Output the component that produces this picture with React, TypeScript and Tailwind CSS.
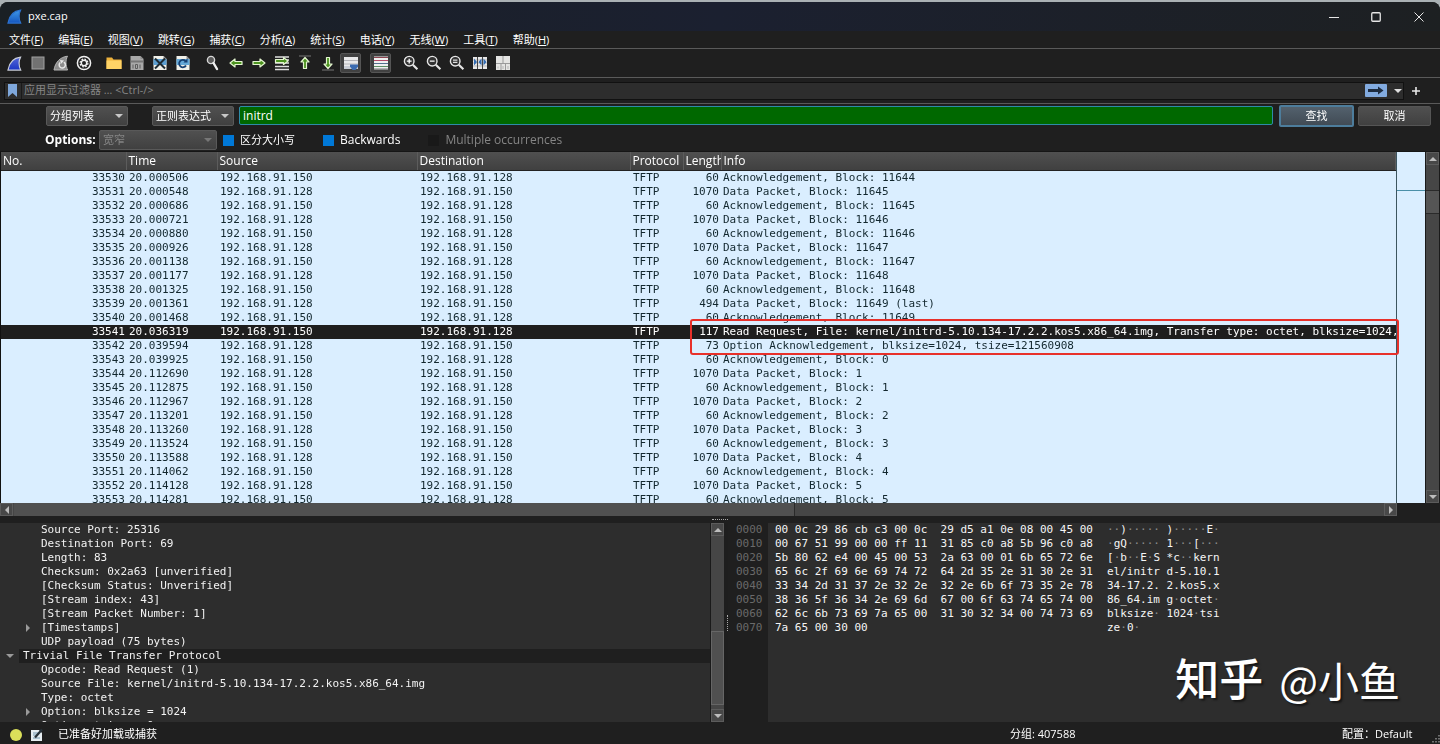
import * as React from "react";
import clsx from "clsx";

const menus = [
  ["文件", "F"],
  ["编辑", "E"],
  ["视图", "V"],
  ["跳转", "G"],
  ["捕获", "C"],
  ["分析", "A"],
  ["统计", "S"],
  ["电话", "Y"],
  ["无线", "W"],
  ["工具", "T"],
  ["帮助", "H"],
];

const A = "192.168.91.150";
const B = "192.168.91.128";

// no, time, source, destination, length, info
const packets: [number, string, string, string, number, string][] = [
  [33530, "20.000506", A, B, 60, "Acknowledgement, Block: 11644"],
  [33531, "20.000548", B, A, 1070, "Data Packet, Block: 11645"],
  [33532, "20.000686", A, B, 60, "Acknowledgement, Block: 11645"],
  [33533, "20.000721", B, A, 1070, "Data Packet, Block: 11646"],
  [33534, "20.000880", A, B, 60, "Acknowledgement, Block: 11646"],
  [33535, "20.000926", B, A, 1070, "Data Packet, Block: 11647"],
  [33536, "20.001138", A, B, 60, "Acknowledgement, Block: 11647"],
  [33537, "20.001177", B, A, 1070, "Data Packet, Block: 11648"],
  [33538, "20.001325", A, B, 60, "Acknowledgement, Block: 11648"],
  [33539, "20.001361", B, A, 494, "Data Packet, Block: 11649 (last)"],
  [33540, "20.001468", A, B, 60, "Acknowledgement, Block: 11649"],
  [33541, "20.036319", A, B, 117, "Read Request, File: kernel/initrd-5.10.134-17.2.2.kos5.x86_64.img, Transfer type: octet, blksize=1024,"],
  [33542, "20.039594", B, A, 73, "Option Acknowledgement, blksize=1024, tsize=121560908"],
  [33543, "20.039925", A, B, 60, "Acknowledgement, Block: 0"],
  [33544, "20.112690", B, A, 1070, "Data Packet, Block: 1"],
  [33545, "20.112875", A, B, 60, "Acknowledgement, Block: 1"],
  [33546, "20.112967", B, A, 1070, "Data Packet, Block: 2"],
  [33547, "20.113201", A, B, 60, "Acknowledgement, Block: 2"],
  [33548, "20.113260", B, A, 1070, "Data Packet, Block: 3"],
  [33549, "20.113524", A, B, 60, "Acknowledgement, Block: 3"],
  [33550, "20.113588", B, A, 1070, "Data Packet, Block: 4"],
  [33551, "20.114062", A, B, 60, "Acknowledgement, Block: 4"],
  [33552, "20.114128", B, A, 1070, "Data Packet, Block: 5"],
  [33553, "20.114281", A, B, 60, "Acknowledgement, Block: 5"],
];

const columns = ["No.", "Time", "Source", "Destination", "Protocol", "Length", "Info"];

const details: { text: string; arrow?: "open" | "closed"; top?: boolean }[] = [
  { text: "Source Port: 25316" },
  { text: "Destination Port: 69" },
  { text: "Length: 83" },
  { text: "Checksum: 0x2a63 [unverified]" },
  { text: "[Checksum Status: Unverified]" },
  { text: "[Stream index: 43]" },
  { text: "[Stream Packet Number: 1]" },
  { text: "[Timestamps]", arrow: "closed" },
  { text: "UDP payload (75 bytes)" },
  { text: "Trivial File Transfer Protocol", arrow: "open", top: true },
  { text: "Opcode: Read Request (1)" },
  { text: "Source File: kernel/initrd-5.10.134-17.2.2.kos5.x86_64.img" },
  { text: "Type: octet" },
  { text: "Option: blksize = 1024", arrow: "closed" },
  { text: "Option: tsize = 0", arrow: "closed" },
];

const bytes = [
  ["0000", "00 0c 29 86 cb c3 00 0c  29 d5 a1 0e 08 00 45 00", "··)····· )·····E·"],
  ["0010", "00 67 51 99 00 00 ff 11  31 85 c0 a8 5b 96 c0 a8", "·gQ····· 1···[···"],
  ["0020", "5b 80 62 e4 00 45 00 53  2a 63 00 01 6b 65 72 6e", "[·b··E·S *c··kern"],
  ["0030", "65 6c 2f 69 6e 69 74 72  64 2d 35 2e 31 30 2e 31", "el/initr d-5.10.1"],
  ["0040", "33 34 2d 31 37 2e 32 2e  32 2e 6b 6f 73 35 2e 78", "34-17.2. 2.kos5.x"],
  ["0050", "38 36 5f 36 34 2e 69 6d  67 00 6f 63 74 65 74 00", "86_64.im g·octet·"],
  ["0060", "62 6c 6b 73 69 7a 65 00  31 30 32 34 00 74 73 69", "blksize· 1024·tsi"],
  ["0070", "7a 65 00 30 00", "ze·0·"],
];

const mono = "font-['DejaVu_Sans_Mono','Noto_Sans_CJK_SC',monospace] text-[11px] leading-[14px]";

function Fin({ top, bottom, edge, size }: { top: string; bottom: string; edge: string; size: number }) {
  const id = React.useId();
  return (
    <svg width={size} height={size} viewBox="0 0 16 16">
      <defs>
        <linearGradient id={id} x1="0" y1="0" x2="0" y2="1">
          <stop offset="0" stopColor={top} />
          <stop offset="1" stopColor={bottom} />
        </linearGradient>
      </defs>
      <path d="M1 15C2.2 7.5 7 2 14.5 1.2C12.4 5 12.6 10.5 14.6 15Z" fill={`url(#${id})`} stroke={edge} strokeWidth="1.2" />
    </svg>
  );
}

function Icon({ children }: { children: React.ReactNode }) {
  return (
    <svg width="16" height="16" viewBox="0 0 16 16" fill="none">
      {children}
    </svg>
  );
}

function Page({ fill, children }: { fill: string; children: React.ReactNode }) {
  return (
    <Icon>
      <path d="M1.500 1h10l3 3v11h-13z" fill={fill} />
      <path d="M11.500 1v3h3z" fill="#8b8b8b" />
      {children}
    </Icon>
  );
}

function Lens({ children }: { children?: React.ReactNode }) {
  return (
    <Icon>
      <circle cx="6.2" cy="6.2" r="4.8" fill="#333" stroke="#e6e6e6" strokeWidth="1.4" />
      <path d="M9.8 9.8l4.6 4.4" stroke="#e6e6e6" strokeWidth="2.2" />
      {children}
    </Icon>
  );
}

const arrowStyle = { fill: "#4d9420", stroke: "#e3f5cf", strokeWidth: 1.2, strokeLinejoin: "round" as const };

const tools: { label: string; icon: React.ReactNode; gap?: boolean; on?: boolean }[] = [
  { label: "开始捕获", icon: <Fin size={15} top="#5568d8" bottom="#1c36c4" edge="#c9cdd8" /> },
  { label: "停止捕获", icon: <Icon><rect x="2" y="2" width="12" height="12" fill="#727272" stroke="#a2a2a2" /></Icon> },
  {
    label: "重新开始",
    icon: (
      <Icon>
        <path d="M1 15C2.2 7.5 7 2 14.5 1.2C12.4 5 12.6 10.5 14.6 15Z" fill="#8d8d8d" stroke="#b5b5b5" />
        <path d="M10.8 7.2a3.1 3.1 0 1 1-3.6 .4" stroke="#e8e8e8" strokeWidth="1.5" />
        <path d="M7 5l1.2 3.8L11 5.6z" fill="#e8e8e8" />
      </Icon>
    ),
  },
  {
    label: "捕获选项",
    icon: (
      <Icon>
        <circle cx="8" cy="8" r="6.6" stroke="#f0f0f0" strokeWidth="1.5" />
        <circle cx="8" cy="8" r="3.9" stroke="#f0f0f0" strokeWidth="1.2" strokeDasharray="1.7 1.36" />
        <circle cx="8" cy="8" r="2.7" stroke="#f0f0f0" strokeWidth="1.4" />
      </Icon>
    ),
  },
  {
    label: "打开",
    gap: true,
    icon: (
      <Icon>
        <path d="M0.5 2.5h5.5l1.5 2h8v9.5h-15z" fill="#eeb23c" />
        <path d="M0.5 5.5h15v8.5h-15z" fill="#ffd366" />
      </Icon>
    ),
  },
  {
    label: "保存",
    icon: (
      <Page fill="#a9a9a9">
        <path d="M1.5 5.5h13v2h-13z" fill="#777" />
        <path d="M4 9.5v4M6.5 9.5h2v4h-2zM11 9.5v4" stroke="#5d5d5d" />
      </Page>
    ),
  },
  {
    label: "关闭",
    icon: (
      <Page fill="#f1f1ea">
        <path d="M1.5 4h13v6h-13z" fill="#5b9fd2" />
        <path d="M3 3.5l10 10M13 3.5l-10 10" stroke="#1d2b33" strokeWidth="2" />
      </Page>
    ),
  },
  {
    label: "重新加载",
    icon: (
      <Page fill="#f1f1ea">
        <path d="M1.5 4h13v6h-13z" fill="#65a9d8" />
        <path d="M11 10.5a3.7 3.7 0 1 1-.5-4.5" stroke="#163f70" strokeWidth="1.8" />
        <path d="M8.5 7.5h4V3.5z" fill="#163f70" />
      </Page>
    ),
  },
  {
    label: "查找",
    gap: true,
    icon: (
      <Icon>
        <circle cx="6" cy="5" r="3.6" fill="#5a5a5a" stroke="#d7d7d7" strokeWidth="1.4" />
        <path d="M8.5 8l3.5 6" stroke="#f0f0f0" strokeWidth="2.4" strokeLinecap="round" />
      </Icon>
    ),
  },
  { label: "后退", icon: <Icon><path d="M2 8l5-4v2.5h7v3H7V12z" {...arrowStyle} /></Icon> },
  { label: "前进", icon: <Icon><path d="M14 8l-5-4v2.5H2v3h7V12z" {...arrowStyle} /></Icon> },
  {
    label: "转到分组",
    icon: (
      <Icon>
        <path d="M1 2h14M1 5h14M1 8h14M1 11.5h14M1 14.5h14" stroke="#dedede" strokeWidth="1.5" />
        <path d="M14 6L9.5 2.5v2H1.5v3h8v2z" {...arrowStyle} />
      </Icon>
    ),
  },
  {
    label: "首个分组",
    icon: (
      <Icon>
        <path d="M2 1h12" stroke="#777" />
        <path d="M8 2.5l4 4.5H9.5v6.5h-3V7H4z" {...arrowStyle} />
      </Icon>
    ),
  },
  {
    label: "最后分组",
    icon: (
      <Icon>
        <path d="M2 15h12" stroke="#777" />
        <path d="M8 13.5l4-4.5H9.5V2.5h-3V9H4z" {...arrowStyle} />
      </Icon>
    ),
  },
  {
    label: "自动滚动",
    on: true,
    icon: (
      <Icon>
        <path d="M1 2h14v12H1z" fill="#e9e9ea" />
        <path d="M1 5.5h14M1 9h14" stroke="#b4b4b8" />
        <path d="M1 11h14v3H1z" fill="#c8ccd4" />
        <path d="M7 9.5h8v2l-2.5 3.5h-3L7 11.5z" fill="#3b6bb0" />
      </Icon>
    ),
  },
  {
    label: "着色",
    on: true,
    gap: true,
    icon: (
      <Icon>
        <path d="M1 1.5h14v13H1z" fill="#f0f0f0" />
        <path d="M1 2.5h14" stroke="#8f4552" />
        <path d="M1 5.5h14" stroke="#b44b68" />
        <path d="M1 8.5h14" stroke="#54718f" />
        <path d="M1 11.5h14" stroke="#5c8e63" />
        <path d="M1 14h14" stroke="#777" />
      </Icon>
    ),
  },
  { label: "放大", gap: true, icon: <Lens><path d="M3.8 6.2h4.8M6.2 3.8v4.8" stroke="#fff" strokeWidth="1.3" /></Lens> },
  { label: "缩小", icon: <Lens><path d="M3.8 6.2h4.8" stroke="#fff" strokeWidth="1.3" /></Lens> },
  { label: "原始大小", icon: <Lens><path d="M4 5.2h4.4M4 7.4h4.4" stroke="#ddd" strokeWidth="1.2" /></Lens> },
  {
    label: "调整列宽",
    icon: (
      <Icon>
        <path d="M1 2h14v12H1z" fill="#e8e8e8" />
        <path d="M1 5h14M1 8h14M1 11h14" stroke="#b9b9b9" />
        <path d="M5.5 2v12M10.5 2v12" stroke="#444" />
        <path d="M2 3.5v7l3-3.5zM9.5 3.5v7L6.5 7zM11.5 3.5v7l3-3.5z" fill="#326bb2" />
      </Icon>
    ),
  },
  {
    label: "重置布局",
    icon: (
      <Icon>
        <path d="M1 1h14v14H1z" fill="#e4e4e2" />
        <path d="M8 1v7M1 8.5h14M6 8.5V15M10.5 8.5V15" stroke="#9a9a9a" />
        <path d="M3 11.5v2M8 11v3M13 11v3" stroke="#b5b5b5" />
      </Icon>
    ),
  },
];

function Triangle({ dir, color = "#bdbdbd" }: { dir: "up" | "down" | "left" | "right"; color?: string }) {
  const d = {
    up: "M0 6l4-4 4 4z",
    down: "M0 2l4 4 4-4z",
    left: "M6 0L2 4l4 4z",
    right: "M2 0l4 4-4 4z",
  }[dir];
  return (
    <svg width="8" height="8" viewBox="0 0 8 8" className="shrink-0">
      <path d={d} fill={color} />
    </svg>
  );
}

function Select({ value, label, className, disabled }: { value: string; label: string; className: string; disabled?: boolean }) {
  return (
    <div className={clsx("relative", className)}>
      <select
        aria-label={label}
        disabled={disabled}
        className={clsx(
          "h-5 w-full appearance-none rounded-xs border border-[#595959] bg-linear-to-b from-[#505050] to-[#404040] px-[3px] leading-[18px] outline-none",
          disabled ? "text-[#858585]" : "text-white"
        )}
      >
        <option>{value}</option>
      </select>
      <span className="pointer-events-none absolute inset-y-0 right-[5px] flex items-center">
        <Triangle dir="down" color={disabled ? "#777" : "#c8c8c8"} />
      </span>
    </div>
  );
}

function Check({ label, checked, disabled }: { label: React.ReactNode; checked?: boolean; disabled?: boolean }) {
  return (
    <label className={clsx("flex items-center gap-[6px]", disabled && "text-[#858585]")}>
      <input
        type="checkbox"
        defaultChecked={checked}
        disabled={disabled}
        className="size-[11px] appearance-none bg-[#191919] checked:bg-[#0078d7]"
      />
      {label}
    </label>
  );
}

function ArrowButton({ dir }: { dir: "up" | "down" | "left" | "right" }) {
  return (
    <button type="button" aria-label={dir} className="flex size-[13px] shrink-0 items-center justify-center border border-[#5c5c5c] bg-[#484848]">
      <Triangle dir={dir} />
    </button>
  );
}

function TitleBar() {
  return (
    <header className="flex h-[29px] shrink-0 items-center bg-linear-to-r from-[#1a2024] via-[#1b2030] to-[#1d2022] pl-[7px]">
      <Fin size={15} top="#3f9ae8" bottom="#1455c0" edge="#2c72cf" />
      <h1 className="ml-[6px] flex-1">pxe.cap</h1>
      <div className="flex text-[#e6e6e6]">
        <button type="button" aria-label="最小化" className="flex w-[43px] justify-center">
          <svg width="10" height="10" viewBox="0 0 10 10"><path d="M0 5.5h10" stroke="currentColor" /></svg>
        </button>
        <button type="button" aria-label="最大化" className="flex w-[42px] justify-center">
          <svg width="10" height="10" viewBox="0 0 10 10" fill="none"><rect x=".75" y=".75" width="8.5" height="8.5" rx="1" stroke="currentColor" strokeWidth="1.3" /></svg>
        </button>
        <button type="button" aria-label="关闭窗口" className="flex w-[43px] justify-center">
          <svg width="10" height="10" viewBox="0 0 10 10"><path d="M.5 .5l9 9M9.5 .5l-9 9" stroke="currentColor" /></svg>
        </button>
      </div>
    </header>
  );
}

function PacketList() {
  return (
    <section className="relative flex h-[351px] shrink-0 border-l border-[#111]">
      <div className="min-w-0 flex-1 overflow-hidden bg-[#daeeff]">
        <table className="w-full table-fixed border-collapse">
          <colgroup>
            <col className="w-[125px]" />
            <col className="w-[91px]" />
            <col className="w-[200px]" />
            <col className="w-[213px]" />
            <col className="w-[53px]" />
            <col className="w-[38px]" />
            <col />
          </colgroup>
          <thead>
            <tr className="h-[18px] bg-linear-to-b from-[#505050] to-[#404040] text-left text-[12px] leading-[17px] text-white">
              {columns.map((c) => (
                <th key={c} className="overflow-hidden border-r border-b border-r-[#5c5c5c] border-b-[#222] p-0 pl-[2px] font-normal whitespace-nowrap">
                  {c}
                </th>
              ))}
            </tr>
          </thead>
          <tbody className={mono}>
            {packets.map(([no, time, src, dst, len, info]) => (
              <tr key={no} className={clsx("whitespace-pre", no === 33541 ? "bg-[#1e1e1e] text-white" : "text-[#12272e]")}>
                <td className="p-0 pr-[1px] text-right">{no}</td>
                <td className="p-0 pl-[3px]">{time}</td>
                <td className="p-0 pl-[3px]">{src}</td>
                <td className="p-0 pl-[3px]">{dst}</td>
                <td className="p-0 pl-[3px]">TFTP</td>
                <td className="p-0 pr-[2px] text-right">{len}</td>
                <td className="overflow-hidden p-0 pl-[2px]">{info}</td>
              </tr>
            ))}
          </tbody>
        </table>
      </div>
      <div className="w-[29px] border-l border-[#3c5560] bg-[#daeeff]">
        <div className="h-[39px] border-b border-[#4a8fa8]" />
      </div>
      <div className="flex w-[15px] flex-col border-x border-[#1a1a1a] bg-[#464646]">
        <ArrowButton dir="up" />
        <div className="mt-[25px] h-6 border-y border-[#2a2a2a] bg-[#555]" />
        <div className="flex-1" />
        <ArrowButton dir="down" />
      </div>
      {/* highlighted request / option ack */}
      <div className="pointer-events-none absolute top-[167px] right-[41px] left-[689px] h-9 rounded-[3px] border-2 border-[#e8302a]" />
    </section>
  );
}

function Details() {
  return (
    <section className="flex w-[724px] shrink-0 bg-[#2d2d2d]">
      <ul className={clsx("min-w-0 flex-1 overflow-hidden text-[#f2f2f2]", mono)}>
        {details.map((d) => (
          <li key={d.text} className={clsx("flex items-center whitespace-pre", d.top ? "pl-[6px]" : "pl-6")}>
            <span className="flex w-[13px] shrink-0 items-center">
              {d.arrow && <Triangle dir={d.arrow === "open" ? "down" : "right"} color="#9a9a9a" />}
            </span>
            <span className={clsx("flex-1 pl-[4px]", d.top && "bg-[#1f1f1f]")}>{d.text}</span>
          </li>
        ))}
      </ul>
      <div className="flex w-[14px] flex-col border-l border-[#1a1a1a] bg-[#464646]">
        <ArrowButton dir="up" />
        <div className="h-[95px]" />
        <div className="h-[74px] border border-[#666] bg-[#505050]" />
        <div className="flex-1" />
        <ArrowButton dir="down" />
      </div>
    </section>
  );
}

function Bytes() {
  return (
    <section className="relative min-w-0 flex-1 bg-[linear-gradient(to_right,#1f1f1f_40px,#2d2d2d_40px)]">
      <table className={clsx("border-collapse whitespace-pre text-[#f5f5f5]", mono)}>
        <tbody>
          {bytes.map(([offset, hex, ascii]) => (
            <tr key={offset}>
              <td className="w-10 p-0 pl-[8px] text-[#6a6a6a]">{offset}</td>
              <td className="w-[339px] p-0 pl-[7px]">{hex}</td>
              <td className="p-0">
                {ascii.split(/(·+)/).map((part, i) =>
                  part.startsWith("·") ? (
                    <span key={i} className="text-[#8a8a8a]">{part}</span>
                  ) : (
                    part
                  )
                )}
              </td>
            </tr>
          ))}
        </tbody>
      </table>
      <p className="absolute right-10 bottom-[15px] flex items-center gap-4 leading-[56px] text-white [text-shadow:2px_2px_2px_#0008]">
        <span className="text-[44px] font-medium">知乎</span>
        <span className="font-['Noto_Sans_CJK_SC',sans-serif] text-[41px]">@小鱼</span>
      </p>
    </section>
  );
}

export default function App() {
  const [query, setQuery] = React.useState("initrd");

  return (
    <div className="h-screen bg-[#aab1b4] pt-[2px]">
      <div className="flex h-full flex-col overflow-hidden rounded-t-lg bg-[#1f1f1f] font-['Open_Sans','Noto_Sans_CJK_SC',sans-serif] text-[11px] text-white">
        <TitleBar />
        <nav className="flex h-[18px] shrink-0 items-center gap-px border-b border-[#5a5a5a] pl-[2px] leading-4">
          {menus.map(([name, key]) => (
            <button key={key} type="button" className="px-[7px] whitespace-nowrap">
              {name}(<u>{key}</u>)
            </button>
          ))}
        </nav>
        <div className="flex h-[29px] shrink-0 items-center border-b border-[#5a5a5a] pl-[3px]">
          {tools.map((t) => (
            <button
              key={t.label}
              type="button"
              aria-label={t.label}
              className={clsx(
                "flex h-5 w-[23px] items-center justify-center",
                t.gap && "ml-[7px]"
              )}
            >
              <span className={clsx("flex h-5 w-[21px] items-center justify-center rounded-xs", t.on && "border border-[#555] bg-[#414141]")}>
                {t.icon}
              </span>
            </button>
          ))}
        </div>

        <div className="flex h-[26px] shrink-0 items-center border-b border-[#5a5a5a] pl-1">
          <div className="flex h-[18px] flex-1 items-center border border-[#111] bg-[#2d2d2d] pl-[3px]">
            <svg width="9" height="13" viewBox="0 0 9 13" className="mr-[4px]">
              <path d="M0 0h9v13L4.5 9 0 13z" fill="#7fa8dc" />
            </svg>
            <input
              aria-label="显示过滤器"
              placeholder="应用显示过滤器 … <Ctrl-/>"
              className="h-4 min-w-0 flex-1 border-l border-[#1a1a1a] bg-transparent pl-[2px] outline-none placeholder:text-[#858585]"
            />
            <button type="button" aria-label="应用" className="flex h-[13px] w-[22px] items-center justify-center rounded-[1px] bg-[#82abe0]">
              <svg width="16" height="9" viewBox="0 0 16 9">
                <path d="M0 3h10V.5l5.5 4L10 8.5V6H0z" fill="#1d2c40" />
              </svg>
            </button>
            <button type="button" aria-label="最近的过滤器" className="flex w-4 justify-end pr-px">
              <Triangle dir="down" color="#e0e0e0" />
            </button>
          </div>
          <button type="button" aria-label="添加" className="flex w-9 pl-2">
            <svg width="8" height="8" viewBox="0 0 8 8">
              <path d="M4 0v8M0 4h8" stroke="#e8e8e8" strokeWidth="1.6" />
            </svg>
          </button>
        </div>

        <div className="flex h-[23px] shrink-0 items-center pr-[9px] pl-[46px]">
          <Select label="搜索范围" value="分组列表" className="w-[82px]" />
          <Select label="搜索类型" value="正则表达式" className="ml-6 w-[82px]" />
          <input
            aria-label="搜索"
            autoFocus
            value={query}
            onChange={(e) => setQuery(e.target.value)}
            className="ml-[5px] h-[19px] min-w-0 flex-1 rounded-xs border border-[#2e8ba8] bg-[#006800] px-[3px] text-[12px] outline-none"
          />
          <button type="button" className="ml-[6px] h-[22px] w-[75px] rounded-xs border-2 border-[#4d7d9c] bg-linear-to-b from-[#53616d] to-[#414b55] leading-4">
            查找
          </button>
          <button type="button" className="ml-1 h-5 w-[73px] rounded-xs border border-[#555] bg-linear-to-b from-[#505050] to-[#404040] leading-4">
            取消
          </button>
        </div>
        <div className="flex h-[25px] shrink-0 items-center border-b border-[#161616] pt-[2px] pl-[45px]">
          <b className="w-[54px] text-[12px]">Options:</b>
          <Select label="字符宽度" value="宽窄" className="mr-[6px] w-[118px]" disabled />
          <div className="flex gap-7">
            <Check label="区分大小写" checked />
            <Check label={<span className="text-[12px]">Backwards</span>} checked />
            <Check label={<span className="text-[12px]">Multiple occurrences</span>} disabled />
          </div>
        </div>

        <PacketList />
        <div className="mr-[43px] flex h-[13px] shrink-0 bg-[#464646]">
          <ArrowButton dir="left" />
          <div className="ml-px w-[781px] border-r border-[#2a2a2a] bg-[#505050]" />
          <div className="flex-1" />
          <ArrowButton dir="right" />
        </div>
        <div className="flex h-[6px] shrink-0 items-center justify-center">
          <div className="w-4 border-t border-dotted border-[#aaa]" />
        </div>

        <main className="flex min-h-0 flex-1 pt-px">
          <Details />
          <div className="flex w-1 items-center justify-end bg-[#1e1e1e]">
            <div className="h-4 border-l border-dotted border-[#aaa]" />
          </div>
          <Bytes />
        </main>

        <footer className="flex h-[22px] shrink-0 items-center pt-[3px] pl-[10px]">
          <span className="size-3 rounded-full bg-[#dbe05a]" />
          <button type="button" aria-label="注释" className="ml-2">
            <svg width="14" height="14" viewBox="0 0 14 14">
              <path d="M1 2h8l3 3v8H1z" fill="#e6eef2" />
              <path d="M3 5h5M3 7h4M3 10h7" stroke="#7297b0" />
              <path d="M5 9.5L12 1.5" stroke="#26323a" strokeWidth="2.2" />
            </svg>
          </button>
          <span className="ml-[14px] flex-1">已准备好加载或捕获</span>
          <span className="w-[332px]">分组: 407588</span>
          <span className="w-[88px]">配置：Default</span>
          <svg width="10" height="10" viewBox="0 0 10 10" className="self-end">
            <path d="M9 1v8M6 4v5M3 7v2" stroke="#8a8a8a" strokeWidth="1.5" strokeDasharray="1.5 1.5" />
          </svg>
        </footer>
      </div>
    </div>
  );
}
